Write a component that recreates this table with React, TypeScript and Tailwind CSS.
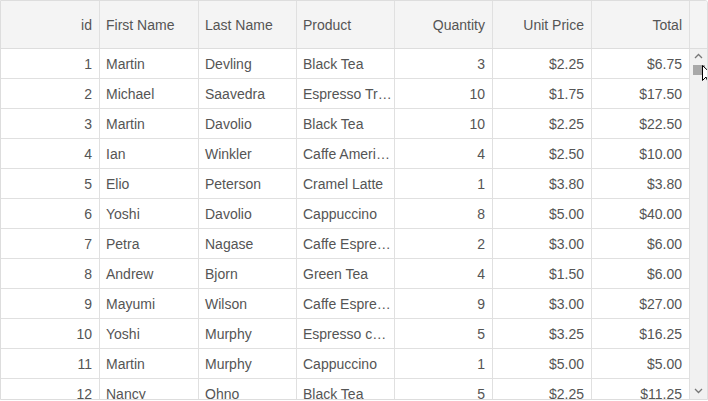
type Order = {
  id: number;
  first: string;
  last: string;
  product: string;
  qty: number;
  price: number;
};

const orders: Order[] = [
  { id: 1, first: "Martin", last: "Devling", product: "Black Tea", qty: 3, price: 2.25 },
  { id: 2, first: "Michael", last: "Saavedra", product: "Espresso Truffle", qty: 10, price: 1.75 },
  { id: 3, first: "Martin", last: "Davolio", product: "Black Tea", qty: 10, price: 2.25 },
  { id: 4, first: "Ian", last: "Winkler", product: "Caffe Americano", qty: 4, price: 2.5 },
  { id: 5, first: "Elio", last: "Peterson", product: "Cramel Latte", qty: 1, price: 3.8 },
  { id: 6, first: "Yoshi", last: "Davolio", product: "Cappuccino", qty: 8, price: 5 },
  { id: 7, first: "Petra", last: "Nagase", product: "Caffe Espresso", qty: 2, price: 3 },
  { id: 8, first: "Andrew", last: "Bjorn", product: "Green Tea", qty: 4, price: 1.5 },
  { id: 9, first: "Mayumi", last: "Wilson", product: "Caffe Espresso", qty: 9, price: 3 },
  { id: 10, first: "Yoshi", last: "Murphy", product: "Espresso con Panna", qty: 5, price: 3.25 },
  { id: 11, first: "Martin", last: "Murphy", product: "Cappuccino", qty: 1, price: 5 },
  { id: 12, first: "Nancy", last: "Ohno", product: "Black Tea", qty: 5, price: 2.25 },
];

const money = (n: number) => `$${n.toFixed(2)}`;

// widths include the 1px right border of each cell
const cols = [
  { label: "id", w: "w-[99px]", right: true },
  { label: "First Name", w: "w-[99px]", right: false },
  { label: "Last Name", w: "w-[98px]", right: false },
  { label: "Product", w: "w-[98px]", right: false },
  { label: "Quantity", w: "w-[98px]", right: true },
  { label: "Unit Price", w: "w-[99px]", right: true },
  { label: "Total", w: "w-[98px]", right: true },
];

function Cell({ w, right, children }: { w: string; right: boolean; children: React.ReactNode }) {
  return (
    <div
      className={
        w +
        " h-[29px] shrink-0 truncate border-r border-[#e0e0e0] leading-[31px] " +
        (right ? "pl-[4px] pr-[7px] text-right" : "pl-[6px] pr-[2px] text-left")
      }
    >
      {children}
    </div>
  );
}

export default function App() {
  return (
    <div className="relative h-[400px] w-[708px] overflow-hidden rounded-tr-[3px] border border-[#dddddd] bg-white font-['Liberation_Sans',Arial,sans-serif] text-[14px] text-[#555555]">
      {/* header */}
      <div className="flex h-[48px] border-b border-[#dddddd] bg-[#f4f4f4]">
        {cols.map((c) => (
          <div
            key={c.label}
            className={
              c.w +
              " flex h-full shrink-0 items-center border-r border-[#e0e0e0] pt-[2px] " +
              (c.right ? "justify-end pr-[7px]" : "justify-start pl-[6px]")
            }
          >
            {c.label}
          </div>
        ))}
        <div className="h-full flex-1" />
      </div>

      {/* body */}
      <div className="flex h-[350px]">
        <div className="overflow-hidden">
          {orders.map((o) => (
            <div key={o.id} className="flex h-[30px] items-start border-b border-[#e0e0e0]">
              <Cell w="w-[99px]" right>{o.id}</Cell>
              <Cell w="w-[99px]" right={false}>{o.first}</Cell>
              <Cell w="w-[98px]" right={false}>{o.last}</Cell>
              <Cell w="w-[98px]" right={false}>{o.product}</Cell>
              <Cell w="w-[98px]" right>{o.qty}</Cell>
              <Cell w="w-[99px]" right>{money(o.price)}</Cell>
              <Cell w="w-[98px]" right>{money(o.price * o.qty)}</Cell>
            </div>
          ))}
        </div>

        {/* scrollbar */}
        <div className="flex w-[17px] shrink-0 flex-col items-center bg-[#f1f1f1]">
          <svg width="9" height="6" viewBox="0 0 9 6" className="mt-[4px]">
            <path d="M1 5 L4.5 1.5 L8 5" fill="none" stroke="#777" strokeWidth="1.3" />
          </svg>
          <div className="mt-[6px] h-[10px] w-[12px] bg-[#a8a8a8]" />
          <div className="flex-1" />
          <svg width="9" height="6" viewBox="0 0 9 6" className="mb-[5px]">
            <path d="M1 1 L4.5 4.5 L8 1" fill="none" stroke="#777" strokeWidth="1.3" />
          </svg>
        </div>
      </div>

      {/* mouse pointer */}
      <svg
        width="12"
        height="19"
        viewBox="0 0 12 19"
        className="absolute left-[701px] top-[64px]"
      >
        <path d="M0.5 0.5 L0.5 15.5 L4 12 L6.5 18 L9 17 L6.5 11 L11.5 11 Z" fill="#fff" stroke="#000" strokeWidth="1" />
      </svg>
    </div>
  );
}
